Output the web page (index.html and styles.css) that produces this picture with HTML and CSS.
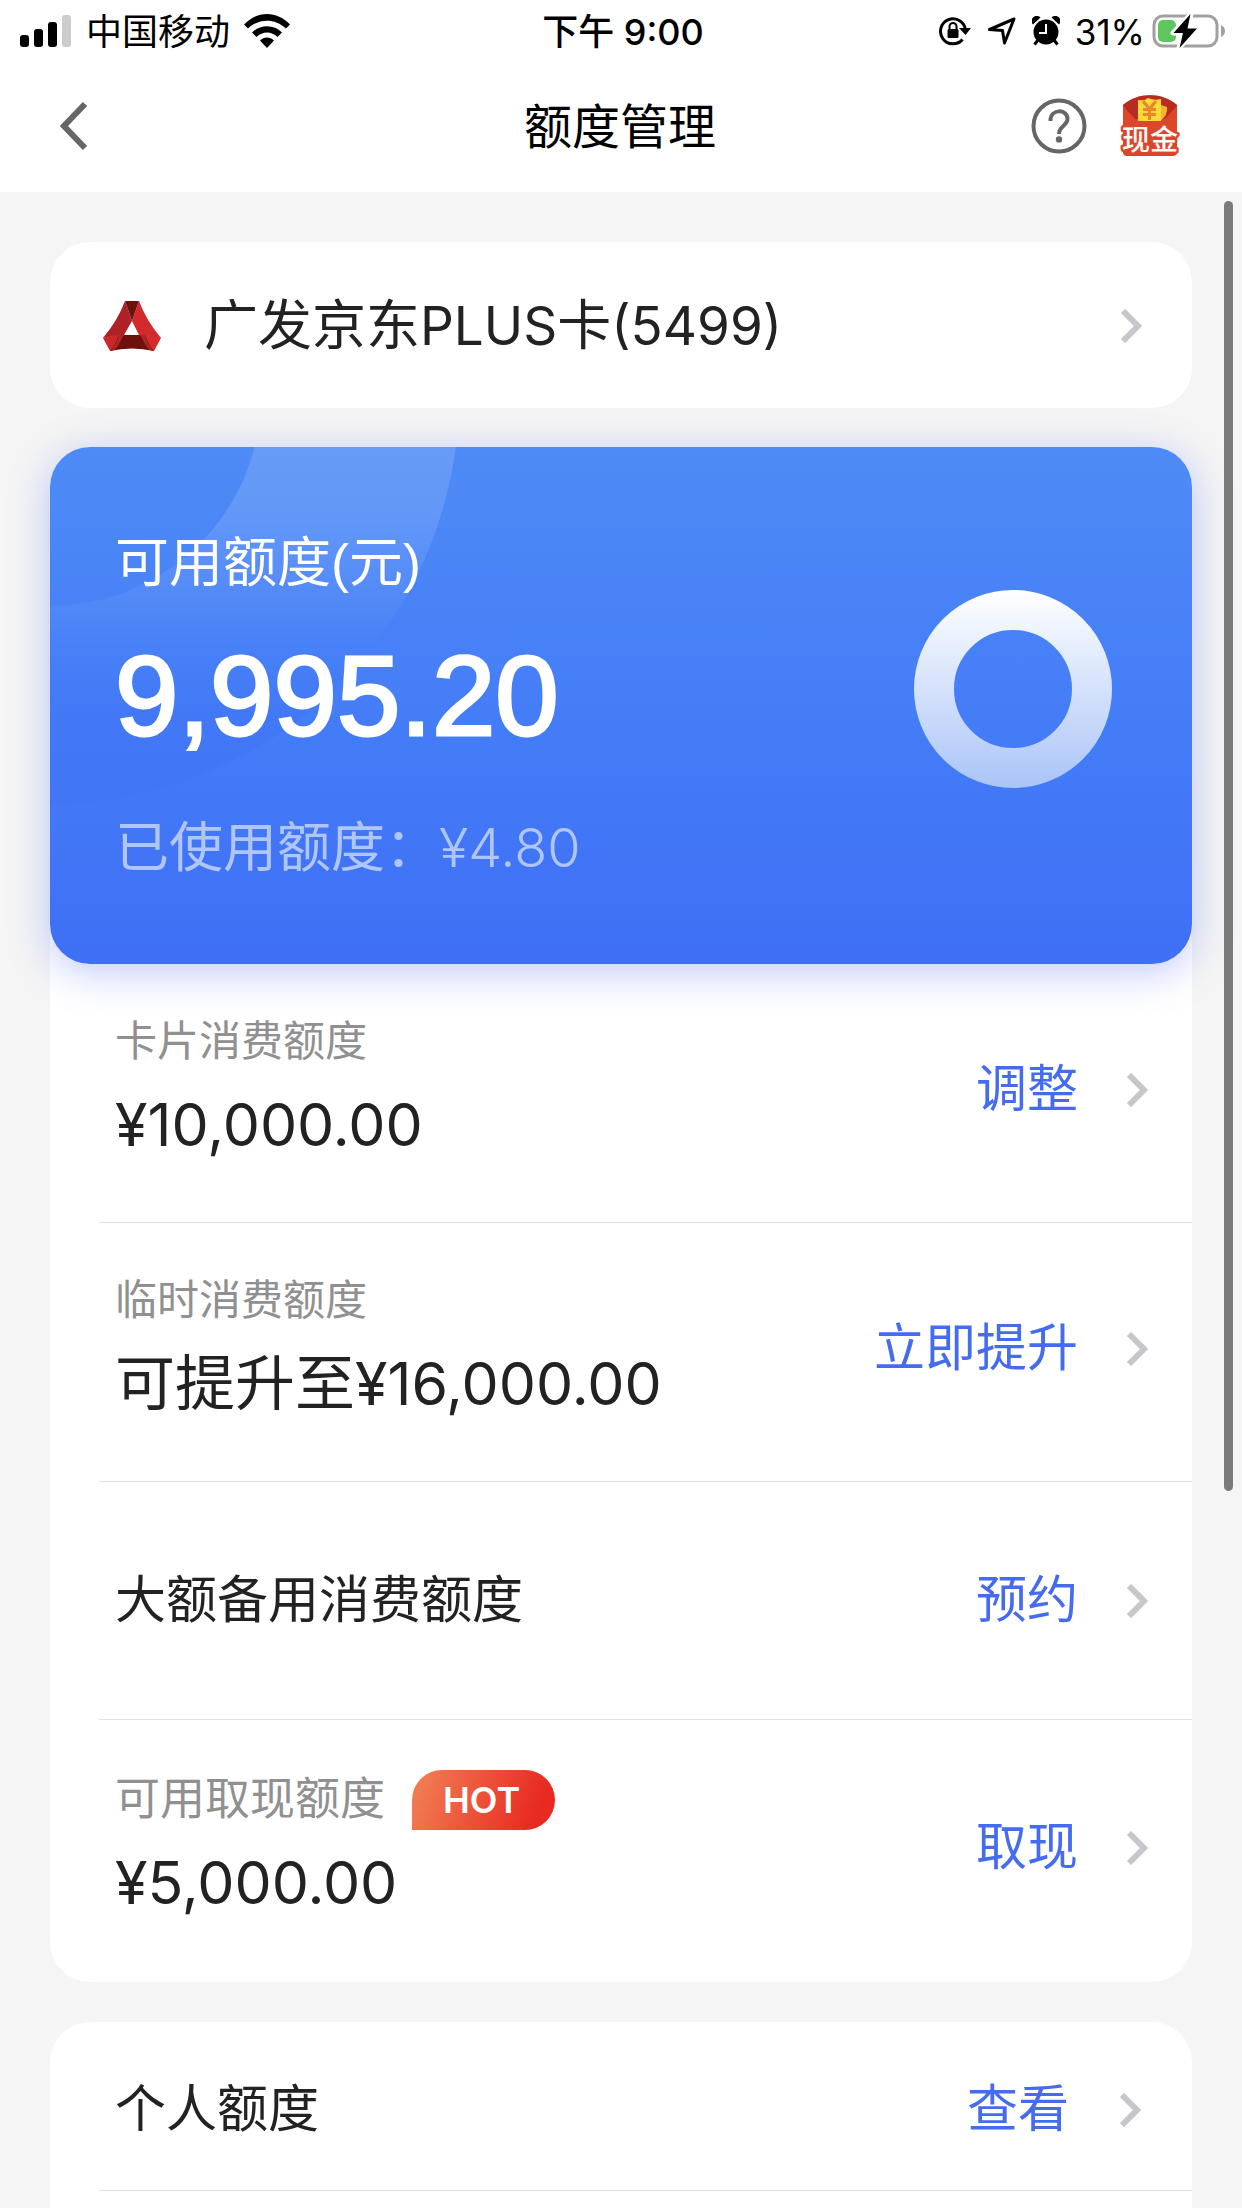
FILE: index.html
```html
<!DOCTYPE html>
<html lang="zh-CN">
<head>
<meta charset="utf-8">
<meta name="viewport" content="width=device-width, initial-scale=1">
<title>额度管理</title>
<link rel="stylesheet" href="styles.css">
</head>
<body>
<div class="status">
  <div class="status-group">
    <svg width="52" height="32" viewBox="0 0 52 32" aria-hidden="true">
      <rect x="0" y="20" width="9" height="12" rx="3"/><rect x="14" y="14" width="9" height="18" rx="3"/><rect x="28" y="7" width="9" height="25" rx="3"/><rect x="42" y="0" width="9" height="32" rx="3" fill="#ccc"/>
    </svg>
    <span class="carrier">中国移动</span>
    <svg width="46" height="34" viewBox="0 0 46 34" aria-hidden="true">
      <path d="M0 10.500C13-3.500 33-3.500 46 10.500L42 14.500C31 4 15 4 4 14.500Z"/><path d="M8 18.500C16 10 30 10 38 18.500L33.500 23C27.500 17 18.500 17 12.500 23Z"/><path d="M16 26.500C20 22.500 26 22.500 30 26.500L23 34Z"/>
    </svg>
  </div>
  <time class="clock">下午 9:00</time>
  <div class="status-group status-group-end">
    <svg width="34" height="32" viewBox="0 0 34 32" aria-hidden="true">
      <path d="M24.500 24.500A12.500 12.500 0 1 1 27.300 14" fill="none" stroke="#000" stroke-width="3"/><path d="M21 13H33L27.500 20Z"/><rect x="9.500" y="14" width="11" height="9" rx="1.500"/><path d="M11.500 15V11.500a3.500 3.500 0 0 1 7 0V15" fill="none" stroke="#000" stroke-width="2"/>
    </svg>
    <svg width="30" height="30" viewBox="0 0 30 30" aria-hidden="true"><path d="M2.500 13.500L27 3L17.500 27L15.500 14.500Z" fill="none" stroke="#000" stroke-width="3" stroke-linejoin="round"/></svg>
    <svg width="28" height="30" viewBox="0 0 28 30" aria-hidden="true">
      <circle cx="14" cy="16" r="12.500"/><path d="M1 8.500A5 5 0 0 1 8.500 1.500ZM27 8.500A5 5 0 0 0 19.500 1.500Z"/><path d="M6 24L2.500 28.500M22 24L25.500 28.500" stroke="#000" stroke-width="3"/><path d="M14 8V17H7" fill="none" stroke="#fff" stroke-width="2"/>
    </svg>
    <span class="battery-text">31%</span>
    <svg width="74" height="36" viewBox="0 0 74 36" aria-hidden="true">
      <rect x="2" y="3" width="63" height="30" rx="9" fill="none" stroke="#a0a0a0" stroke-width="3"/><path d="M69 12Q73 14 73 18T69 24Z" fill="#a0a0a0"/><rect x="6" y="7" width="18" height="22" rx="5" fill="#5ec65f"/><path d="M39 1L21 20H31L27 35L46 15H35.500Z" stroke="#fff" stroke-width="5" stroke-linejoin="round"/><path d="M38.500 1L21.500 20H31L27.500 35L45 15.500H35.500Z"/>
    </svg>
  </div>
</div>
<header class="nav">
  <button class="icon-button" type="button" aria-label="返回"><svg width="28" height="50" viewBox="0 0 28 50"><path d="M25 3L4 25L25 47" fill="none" stroke="#666" stroke-width="6"/></svg></button>
  <h1 class="title">额度管理</h1>
  <div class="nav-actions">
    <button class="icon-button" type="button" aria-label="帮助"><svg width="56" height="56" viewBox="0 0 56 56"><circle cx="28" cy="28" r="25.500" fill="none" stroke="#666" stroke-width="4"/><path d="M19.500 23C19 10.500 36.500 10.500 36.500 21C36.500 28 28 27.500 28 36" fill="none" stroke="#666" stroke-width="4"/><circle cx="28" cy="41.500" r="3.200" fill="#666"/></svg></button>
    <button class="icon-button" type="button" aria-label="现金"><svg class="cash-icon" width="60" height="62" viewBox="0 0 60 62">
      <path d="M3 10C18-3 42-3 57 10V57Q57 61 53 61H7Q3 61 3 57Z" fill="#d9452b"/><path d="M3 10C18-3 42-3 57 10L48 24H12Z" fill="#b92a20"/><path d="M3 11L15 24H45L57 11V46H3Z" fill="#dc472c"/><path d="M38 9L47 12Q48 21 40 26H31Z" fill="#eeb62c"/><path d="M18 5Q25 6 28 3Q34 6 41 4V26H18Z" fill="#fbd938"/><path d="M23 6L29.500 14L36 6M29.500 14V25M23 14.500H36M23 19.500H36" fill="none" stroke="#e8862b" stroke-width="3"/>
      <text class="cash-text" x="30" y="55" text-anchor="middle">现金</text>
    </svg></button>
  </div>
</header>
<main class="content">
  <a class="card bank" href="#card">
    <svg width="60" height="52" viewBox="0 0 60 52" aria-hidden="true">
      <path d="M23 1Q16 20 1 38L22 35L30 21Z" fill="#ad2226"/><path d="M37 1Q44 20 59 38L37 35L30 21Z" fill="#d32b2d"/><path d="M23 1H37L30 21Z" fill="#6b120d"/><path d="M1 38Q11 34 22 35L16 49L8 51Z" fill="#c9292b"/><path d="M59 38Q49 34 37 35L44 49L52 51Z" fill="#d42c2c"/><path d="M17 35H43Q46 44 52 51Q30 46 8 51Q14 44 17 35Z" fill="#6d110d"/><path d="M17 35Q15 44 8 51L13 49.500Q18 43 22 35ZM43 35Q45 44 52 51L47 49.500Q42 43 38 35Z" fill="#b32425"/>
    </svg>
    <span class="bank-name">广发京东<span class="latin">PLUS</span>卡<span class="latin">(5499)</span></span>
    <svg class="chevron" viewBox="0 0 22 34"><path d="M3 2L18 17L3 32"/></svg>
  </a>
  <section class="card limits">
    <div class="hero">
      <svg class="hero-arc" width="412" height="360" viewBox="0 0 412 360" aria-hidden="true">
        <defs><linearGradient id="arc" gradientUnits="userSpaceOnUse" x1="0" y1="0" x2="0" y2="360"><stop offset="0" stop-color="#fff" stop-opacity=".14"/><stop offset=".2" stop-color="#fff" stop-opacity=".13"/><stop offset=".56" stop-color="#fff" stop-opacity="0"/><stop offset=".56" stop-color="#3c6cf3" stop-opacity="0"/><stop offset=".75" stop-color="#3c6cf3" stop-opacity=".3"/><stop offset="1" stop-color="#3c6cf3" stop-opacity=".2"/></linearGradient></defs>
        <circle cx="0" cy="-52" r="310" fill="none" stroke="url(#arc)" stroke-width="198"/>
      </svg>
      <div class="hero-text">
        <p class="hero-label">可用额度(元)</p>
        <p class="hero-value">9,995.20</p>
        <p class="hero-used">已使用额度：<span class="used-value">¥4.80</span></p>
      </div>
      <svg class="ring" width="198" height="198" viewBox="0 0 198 198" aria-hidden="true">
        <defs><linearGradient id="ring" gradientUnits="userSpaceOnUse" x1="0" y1="0" x2="0" y2="198"><stop offset="0" stop-color="#fff"/><stop offset="1" stop-color="#aac4f8"/></linearGradient></defs>
        <circle cx="99" cy="99" r="79" fill="none" stroke="url(#ring)" stroke-width="40"/>
      </svg>
    </div>
    <div class="row">
      <div class="info"><span class="label">卡片消费额度</span><span class="value"><span class="number">¥10,000.00</span></span></div>
      <a class="action" href="#adjust">调整<svg class="chevron" viewBox="0 0 22 34"><path d="M3 2L18 17L3 32"/></svg></a>
    </div>
    <div class="row">
      <div class="info"><span class="label">临时消费额度</span><span class="value">可提升至<span class="number">¥16,000.00</span></span></div>
      <a class="action" href="#raise">立即提升<svg class="chevron" viewBox="0 0 22 34"><path d="M3 2L18 17L3 32"/></svg></a>
    </div>
    <div class="row row-single">
      <span class="name">大额备用消费额度</span>
      <a class="action" href="#reserve">预约<svg class="chevron" viewBox="0 0 22 34"><path d="M3 2L18 17L3 32"/></svg></a>
    </div>
    <div class="row row-cash">
      <div class="info"><span class="label label-cash">可用取现额度<span class="hot">HOT</span></span><span class="value"><span class="number">¥5,000.00</span></span></div>
      <a class="action" href="#cash">取现<svg class="chevron" viewBox="0 0 22 34"><path d="M3 2L18 17L3 32"/></svg></a>
    </div>
  </section>
  <section class="card personal">
    <div class="row row-personal">
      <span class="name">个人额度</span>
      <a class="action" href="#personal">查看<svg class="chevron" viewBox="0 0 22 34"><path d="M3 2L18 17L3 32"/></svg></a>
    </div>
  </section>
</main>
<div class="scrollbar" aria-hidden="true"></div>
</body>
</html>
```
FILE: styles.css
```css
* { box-sizing: border-box; }

body {
  margin: 0;
  min-height: 100vh;
  display: flex;
  flex-direction: column;
  position: relative;
  background: #f5f5f5;
  color: #222;
  font-family: "Liberation Sans", "Noto Sans CJK SC", sans-serif;
}

p, h1 { margin: 0; font-weight: 400; }
a { color: inherit; text-decoration: none; }
svg { display: block; flex: none; }

/* Status bar */
.status {
  display: grid;
  grid-template-columns: 1fr auto 1fr;
  align-items: center;
  height: 60px;
  padding: 0 16px 0 20px;
  background: #fff;
  color: #000;
  font-family: Inter, "Noto Sans CJK SC", sans-serif;
  font-size: 36px;
  line-height: 60px;
}
.status-group { display: flex; align-items: center; gap: 14px; }
.status-group-end { gap: 15px; justify-content: flex-end; }
.clock { font-weight: 500; padding-top: 2px; }
.carrier { padding-top: 2px; }
.battery-text { padding-top: 2px; font-size: 35px; margin-right: -8px; }

/* Title bar */
.nav {
  display: grid;
  grid-template-columns: 1fr auto 1fr;
  align-items: center;
  height: 132px;
  padding: 0 62px 0 60px;
  background: #fff;
}
.title { padding-top: 4px; color: #000; font-size: 48px; line-height: 72px; }
.nav-actions { display: flex; justify-content: flex-end; align-items: center; gap: 33px; }
.icon-button { padding: 0; border: 0; background: none; justify-self: start; }
.cash-icon { overflow: visible; }
.cash-text {
  font: 500 28px "Noto Sans CJK SC", sans-serif;
  fill: #fff;
  stroke: #dc472c;
  stroke-width: 5px;
  stroke-linejoin: round;
  paint-order: stroke;
}

/* Cards */
.content { flex: 1; display: flex; flex-direction: column; padding: 50px 50px 0; }
.card { background: #fff; border-radius: 40px; }
.bank { display: flex; align-items: center; height: 166px; padding: 2px 50px 0 52px; margin-bottom: 39px; }
.bank-name { flex: 1; padding-left: 42px; font-size: 54px; line-height: 80px; }
.latin { font-family: Inter, sans-serif; font-size: 53px; line-height: 1; }
.chevron { width: 22px; height: 34px; fill: none; stroke: #c7c7cb; stroke-width: 6px; }

/* Available limit */
.hero {
  position: relative;
  display: flex;
  align-items: center;
  justify-content: space-between;
  padding: 78px 80px 78px 65px;
  border-radius: 40px;
  background: linear-gradient(#4e8bf6, #447cf7 55%, #3e6ff5);
  box-shadow: 0 8px 40px rgba(72, 104, 240, .35);
  color: #fff;
}
.hero-arc { position: absolute; left: 0; top: 0; border-top-left-radius: 40px; }
.hero-text { position: relative; }
.hero-label { font-size: 54px; line-height: 76px; }
.hero-value { margin: 38px 0 57px; font-size: 114px; line-height: 114px; -webkit-text-stroke: 3px #fff; }
.hero-used { font-size: 54px; line-height: 76px; color: #b0c6fb; }
.used-value { font-family: Inter, sans-serif; font-weight: 300; line-height: 1; }
.ring { margin-bottom: 34px; }

/* Rows */
.row {
  display: flex;
  align-items: center;
  justify-content: space-between;
  margin-left: 49px;
  padding: 48px 44px 54px 16px;
  border-bottom: 1px solid #e2e2e4;
}
.row-single { padding-top: 83px; padding-bottom: 82px; }
.row-cash { padding-top: 50px; padding-bottom: 56px; border-bottom: 0; }
.row-personal { padding-top: 52px; padding-bottom: 44px; padding-right: 51px; }
.row-personal .action { gap: 50px; }
.info { display: flex; flex-direction: column; gap: 12px; }
.label { display: flex; align-items: center; gap: 27px; color: #909090; font-size: 42px; line-height: 60px; }
.label-cash { font-size: 45px; }
.value { font-size: 60px; line-height: 84px; }
.number { font-family: Inter, sans-serif; font-size: 59px; line-height: 1; }
.name { font-size: 51px; line-height: 72px; }
.action { display: flex; align-items: center; gap: 48px; color: #456cf0; font-size: 51px; line-height: 72px; }
.hot {
  padding: 0 35px 0 31px;
  border-radius: 30px 30px 30px 0;
  background: linear-gradient(110deg, #f28355, #e82a22 85%);
  color: #fff;
  font: 600 36px/60px Inter, sans-serif;
}

.limits { margin-bottom: 40px; }
.personal { flex: 1; border-radius: 40px 40px 0 0; }

.scrollbar { position: absolute; right: 9px; top: 201px; width: 9px; height: 1290px; border-radius: 5px; background: #7b7b7b; }
```
